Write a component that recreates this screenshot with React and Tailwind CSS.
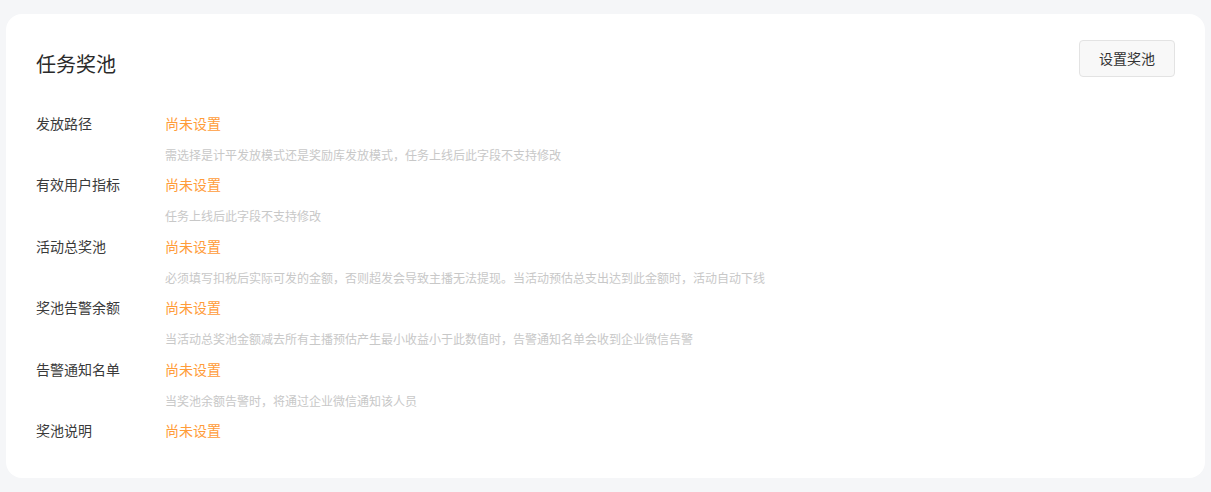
export default function App() {
  const rows = [
    { label: "发放路径", hint: "需选择是计平发放模式还是奖励库发放模式，任务上线后此字段不支持修改" },
    { label: "有效用户指标", hint: "任务上线后此字段不支持修改" },
    { label: "活动总奖池", hint: "必须填写扣税后实际可发的金额，否则超发会导致主播无法提现。当活动预估总支出达到此金额时，活动自动下线" },
    { label: "奖池告警余额", hint: "当活动总奖池金额减去所有主播预估产生最小收益小于此数值时，告警通知名单会收到企业微信告警" },
    { label: "告警通知名单", hint: "当奖池余额告警时，将通过企业微信通知该人员" },
    { label: "奖池说明", hint: null },
  ];
  return (
    <div
      className="min-h-[492px] bg-[#f5f6f8] px-[6px] py-[14px]"
      style={{ fontFamily: '"Noto Sans CJK SC", "Noto Sans", sans-serif' }}
    >
      <div className="rounded-[16px] bg-white pt-[26px] px-[30px] pb-[38px]">
        <div className="flex items-start justify-between">
          <div className="mt-[10px] text-[20px] leading-[28px] text-[#2a2a2a]">任务奖池</div>
          <button className="h-[37px] w-[96px] rounded-[4px] border border-[#e3e3e3] bg-[#f8f8f8] text-[14px] text-[#333]">
            设置奖池
          </button>
        </div>
        <div className="mt-[35px] flex flex-col gap-[10.4px]">
          {rows.map((r) => (
            <div key={r.label} className="flex">
              <div className="w-[129px] shrink-0 text-[14px] leading-[20px] text-[#3a3a3a]">{r.label}</div>
              <div className="flex flex-col">
                <div className="text-[14px] leading-[20px] text-[#ff9c3a]">尚未设置</div>
                {r.hint && (
                  <div className="mt-[13px] text-[12px] leading-[18px] text-[#c8c8c8]">{r.hint}</div>
                )}
              </div>
            </div>
          ))}
        </div>
      </div>
    </div>
  );
}
